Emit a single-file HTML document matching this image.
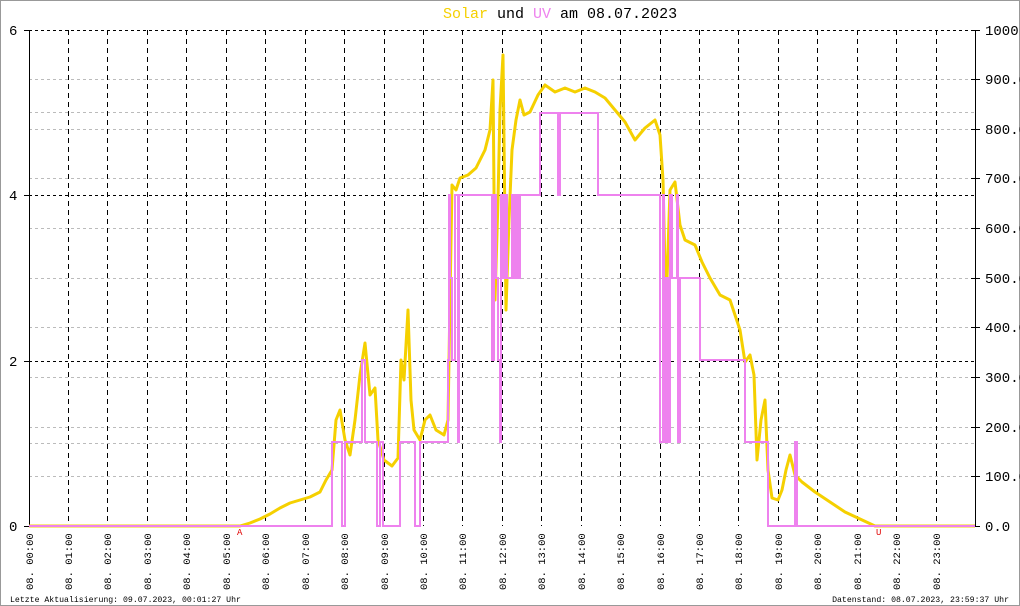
<!DOCTYPE html>
<html><head><meta charset="utf-8"><style>
html,body{margin:0;padding:0;background:#fff}
svg{display:block}
text{font-family:"Liberation Mono",monospace}
</style></head><body>
<svg width="1020" height="606" viewBox="0 0 1020 606" xmlns="http://www.w3.org/2000/svg">
<rect x="0.5" y="0.5" width="1019" height="605" fill="#fff" stroke="#999"/>
<g stroke="#bbb" stroke-dasharray="3,3" stroke-width="1">
<path d="M29,79.5H975M29,129.5H975M29,178.5H975M29,228.5H975M29,278.5H975M29,327.5H975M29,377.5H975M29,427.5H975M29,476.5H975M29,112.5H975M29,443.5H975"/>
</g>
<g stroke="#000" stroke-dasharray="3,3" stroke-width="1">
<path d="M29,30.5H975M29,195.5H975M29,361.5H975"/>
<path id="vl" d=""/>
</g>
<g stroke="#000" stroke-dasharray="5,4" stroke-width="1">
<path d="M68.5,30V526M107.5,30V526M147.5,30V526M186.5,30V526M226.5,30V526M265.5,30V526M305.5,30V526M344.5,30V526M384.5,30V526M423.5,30V526M462.5,30V526M502.5,30V526M541.5,30V526M581.5,30V526M620.5,30V526M660.5,30V526M699.5,30V526M738.5,30V526M778.5,30V526M817.5,30V526M857.5,30V526M896.5,30V526M936.5,30V526"/>
</g>
<g stroke="#000" stroke-width="1">
<path d="M29.5,30V526M975.5,30V526"/>
<path d="M24,30.5H29M24,195.5H29M24,361.5H29M24,526.5H29"/>
<path d="M971,30.5H980M971,79.5H980M971,129.5H980M971,178.5H980M971,228.5H980M971,278.5H980M971,327.5H980M971,377.5H980M971,427.5H980M971,476.5H980M971,526.5H980"/>
</g>
<g font-size="14" fill="#000">
<text x="9" y="35">6</text><text x="9" y="200">4</text><text x="9" y="366">2</text><text x="9" y="531">0</text>
<text x="985" y="35">1000</text><text x="985" y="84">900.0</text><text x="985" y="134">800.0</text><text x="985" y="183">700.0</text><text x="985" y="233">600.0</text><text x="985" y="283">500.0</text><text x="985" y="332">400.0</text><text x="985" y="382">300.0</text><text x="985" y="432">200.0</text><text x="985" y="481">100.0</text><text x="985" y="531">0.0</text>
</g>
<polyline fill="none" stroke="#f5d000" stroke-width="3" stroke-linejoin="round" points="29,526 240,526 250,523 260,519 270,514 280,508 290,503 300,500 310,497 320,492 326,480 332,470 336,420 340,410 345,440 350,455 355,420 360,375 365,343 370,395 375,388 378,440 384,460 392,466 398,458 401,360 404,380 408,310 411,400 414,430 420,440 425,420 430,415 436,430 444,435 448,420 450,300 452,185 456,190 460,178 468,175 476,168 485,150 490,130 493,80 495,300 498,200 500,110 503,55 506,310 509,220 512,150 516,120 520,100 524,115 530,112 538,95 545,85 555,92 565,88 575,92 585,88 595,92 605,98 615,110 625,122 635,140 645,128 655,120 660,135 663,180 666,310 670,190 675,182 680,225 685,240 695,245 702,262 710,278 720,295 730,300 740,330 745,362 750,355 754,375 757,460 761,420 765,400 768,470 772,498 778,500 782,490 786,470 790,455 795,475 802,482 815,492 830,502 845,512 860,519 875,526 975,526"/>
<path fill="none" stroke="#ee82ee" stroke-width="2" d="M29,526H332V442H342V526H345V442H362V360H365V442H377V526H380V442H383V526H400V442H415V526H420V442H448V360H449V195H450V278H452V360H455V195H458V442H459V195H492V360H494V195H496V278H498V360H500V442H501V195H503V278H505V195H507V278H512V195H514V278H516V195H518V278H520V195H540V113H558V195H560V113H598V195H660V442H663V195H664V442H666V278H668V442H670V195H672V278H677V195H678V442H680V278H700V360H745V442H768V526H795V442H797V526H975"/>
<text x="237" y="535" font-size="9" fill="#e00000">A</text>
<text x="876" y="535" font-size="9" fill="#e00000">U</text>
<g font-size="10.5" fill="#000" id="lbl"></g>
<g font-size="15" font-weight="normal">
<text x="443" y="18"><tspan fill="#f5d000">Solar</tspan><tspan fill="#000"> und </tspan><tspan fill="#ee82ee">UV</tspan><tspan fill="#000"> am 08.07.2023</tspan></text>
</g>
<g font-size="8.2" fill="#000">
<text x="10" y="602">Letzte Aktualisierung: 09.07.2023, 00:01:27 Uhr</text>
<text x="1009" y="602" text-anchor="end">Datenstand: 08.07.2023, 23:59:37 Uhr</text>
</g>
<g font-size="10.5" fill="#000">
<text transform="translate(33,590) rotate(-90)">08. 00:00</text>
<text transform="translate(72,590) rotate(-90)">08. 01:00</text>
<text transform="translate(111,590) rotate(-90)">08. 02:00</text>
<text transform="translate(151,590) rotate(-90)">08. 03:00</text>
<text transform="translate(190,590) rotate(-90)">08. 04:00</text>
<text transform="translate(230,590) rotate(-90)">08. 05:00</text>
<text transform="translate(269,590) rotate(-90)">08. 06:00</text>
<text transform="translate(309,590) rotate(-90)">08. 07:00</text>
<text transform="translate(348,590) rotate(-90)">08. 08:00</text>
<text transform="translate(388,590) rotate(-90)">08. 09:00</text>
<text transform="translate(427,590) rotate(-90)">08. 10:00</text>
<text transform="translate(466,590) rotate(-90)">08. 11:00</text>
<text transform="translate(506,590) rotate(-90)">08. 12:00</text>
<text transform="translate(545,590) rotate(-90)">08. 13:00</text>
<text transform="translate(585,590) rotate(-90)">08. 14:00</text>
<text transform="translate(624,590) rotate(-90)">08. 15:00</text>
<text transform="translate(664,590) rotate(-90)">08. 16:00</text>
<text transform="translate(703,590) rotate(-90)">08. 17:00</text>
<text transform="translate(742,590) rotate(-90)">08. 18:00</text>
<text transform="translate(782,590) rotate(-90)">08. 19:00</text>
<text transform="translate(821,590) rotate(-90)">08. 20:00</text>
<text transform="translate(861,590) rotate(-90)">08. 21:00</text>
<text transform="translate(900,590) rotate(-90)">08. 22:00</text>
<text transform="translate(940,590) rotate(-90)">08. 23:00</text>
</g>
</svg>
</body></html>
